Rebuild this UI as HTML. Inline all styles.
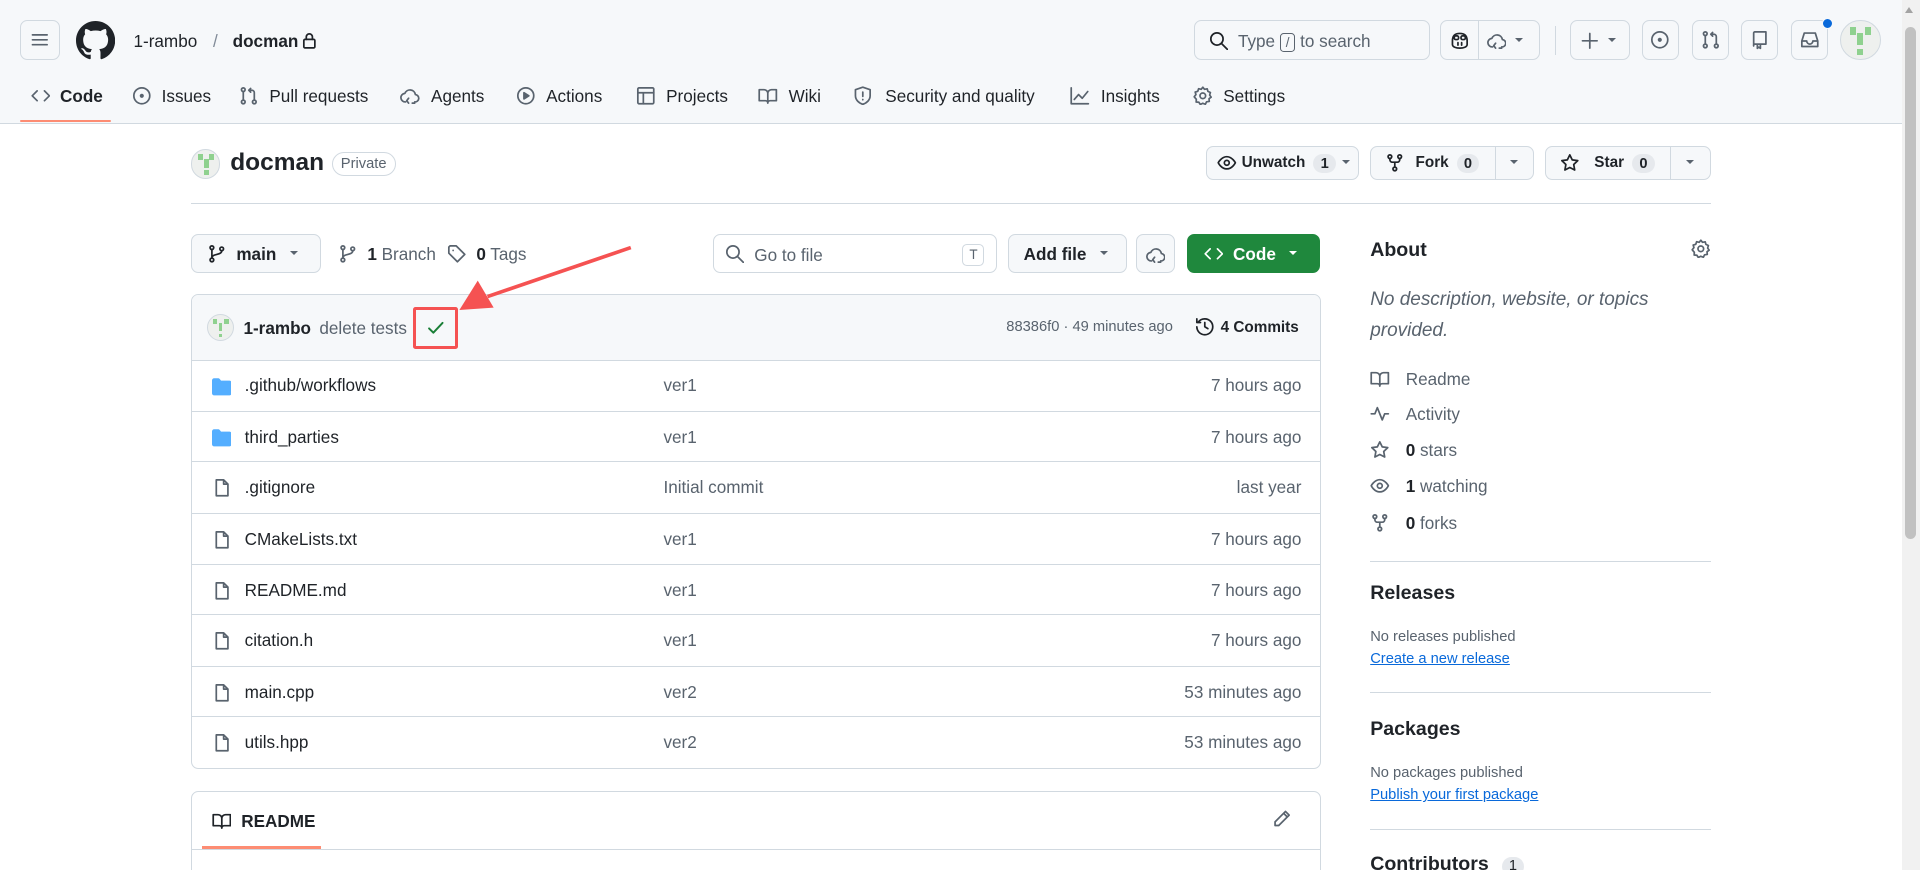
<!DOCTYPE html>
<html><head><meta charset="utf-8"><style>
*{box-sizing:border-box;margin:0;padding:0}
html,body{width:1920px;height:870px;overflow:hidden;background:#fff}
#z{zoom:1.22449;width:1568px;height:711px;position:relative;font-family:"Liberation Sans",sans-serif;font-size:14px;color:#1f2328;overflow:hidden}
.a{position:absolute}
.btn{position:absolute;border:1px solid #d1d9e0;border-radius:6px;background:#f6f8fa}
.hb{background:transparent}
svg{display:block}
.ic{position:absolute;fill:none;stroke:#59636e;stroke-width:1.4;stroke-linecap:round;stroke-linejoin:round}
.row{position:absolute;left:0;width:922px;height:42px;border-top:1px solid #d1d9e0}
.row .n{position:absolute;left:43px;top:12px}
.row .m{position:absolute;left:385px;top:12px;color:#59636e}
.row .t{position:absolute;right:16px;top:12px;color:#59636e}
.cnt{display:inline-block;background:#e6e9ed;border-radius:10px;padding:1px 6px;font-size:12px;margin-left:6px}
.side{position:absolute;left:1119px;color:#59636e}
.hr{position:absolute;left:1119px;width:278px;height:1px;background:#d1d9e0}
</style></head><body><div id="z">
<!-- header -->
<div class="a" style="left:0;top:0;width:1568px;height:101px;background:#f6f8fa;border-bottom:1px solid #d1d9e0"></div>
<div class="btn hb" style="left:16px;top:16px;width:33px;height:33px"><svg class="ic" style="left:8px;top:8px" width="16" height="16"><path d="M2 4h12M2 8h12M2 12h12"/></svg></div>
<svg class="a" style="left:62px;top:17px" width="32" height="32" viewBox="0 0 16 16"><path fill="#1f2328" d="M8 0C3.58 0 0 3.58 0 8c0 3.54 2.29 6.53 5.47 7.59.4.07.55-.17.55-.38 0-.19-.01-.82-.01-1.490-2.01.37-2.53-.49-2.69-.94-.09-.23-.48-.94-.82-1.13-.28-.15-.68-.52-.01-.53.63-.01 1.08.58 1.23.82.72 1.21 1.87.87 2.33.66.07-.52.28-.87.51-1.07-1.78-.2-3.640-.89-3.640-3.95 0-.87.31-1.59.82-2.15-.08-.2-.36-1.02.08-2.12 0 0 .67-.21 2.2.82.64-.18 1.32-.27 2-.27.68 0 1.36.09 2 .27 1.53-1.04 2.2-.82 2.2-.82.44 1.1.16 1.92.08 2.12.51.56.82 1.27.82 2.15 0 3.07-1.87 3.75-3.65 3.95.29.25.54.73.54 1.48 0 1.07-.01 1.93-.01 2.2 0 .21.15.46.55.38A8.013 8.013 0 0016 8c0-4.42-3.58-8-8-8z"/></svg>
<div class="a" style="left:109px;top:25px">1-rambo</div>
<div class="a" style="left:174px;top:25px;color:#818b98">/</div>
<div class="a" style="left:190px;top:25px;font-weight:bold">docman</div>
<svg class="ic" style="left:247px;top:26px;stroke:#1f2328" width="12" height="14"><rect x="1.5" y="6" width="9" height="7" rx="1"/><path d="M3.5 6V4a2.5 2.5 0 015 0v2"/></svg>
<!-- nav -->
<svg class="ic" style="left:25px;top:70px" width="16" height="16"><path d="M5 4L1 8l4 4M11 4l4 4-4 4"/></svg>
<div class="a" style="left:49px;top:70px;font-weight:bold">Code</div>
<div class="a" style="left:16px;top:98px;width:75px;height:2px;background:#fd8c73;border-radius:2px"></div>
<svg class="ic" style="left:108px;top:70px" width="16" height="16"><circle cx="8" cy="8" r="6.5"/><circle cx="8" cy="8" r="1" fill="#59636e"/></svg>
<div class="a" style="left:132px;top:70px">Issues</div>
<svg class="ic" style="left:195px;top:70px" width="16" height="16"><circle cx="3.5" cy="3" r="1.5"/><circle cx="3.5" cy="13" r="1.5"/><circle cx="12.5" cy="13" r="1.5"/><path d="M3.5 4.5v7M12.5 11.5V5.5a2 2 0 00-2-2H8M9.5 2L8 3.5 9.5 5"/></svg>
<div class="a" style="left:220px;top:70px">Pull requests</div>
<svg class="ic" style="left:327px;top:70px" width="16" height="16"><path d="M4.5 13a3.5 3.5 0 01-.5-7 4.5 4.5 0 018.6 1A3 3 0 0112 13M7 10l-1.5 2L7 14M10 14h2"/></svg>
<div class="a" style="left:352px;top:70px">Agents</div>
<svg class="ic" style="left:421px;top:70px" width="16" height="16"><circle cx="8" cy="8" r="6.5"/><path d="M6.5 5.5v5l4-2.5z" fill="#59636e"/></svg>
<div class="a" style="left:446px;top:70px">Actions</div>
<svg class="ic" style="left:519px;top:70px" width="16" height="16"><rect x="1.5" y="1.5" width="13" height="13" rx="1"/><path d="M1.5 5.5h13M6 5.5v9"/></svg>
<div class="a" style="left:544px;top:70px">Projects</div>
<svg class="ic" style="left:619px;top:70px" width="16" height="16"><path d="M1 3h4a3 3 0 013 3v8a2 2 0 00-2-2H1zM15 3h-4a3 3 0 00-3 3v8a2 2 0 012-2h5z"/></svg>
<div class="a" style="left:644px;top:70px">Wiki</div>
<svg class="ic" style="left:697px;top:70px" width="16" height="16"><path d="M8 1l6 2v5c0 3.5-3 6-6 7-3-1-6-3.5-6-7V3zM8 5v3.5M8 11v.2"/></svg>
<div class="a" style="left:723px;top:70px">Security and quality</div>
<svg class="ic" style="left:874px;top:70px" width="16" height="16"><path d="M1 1.5v13h14M3.5 11l3.5-4 3 3 4.5-5.5"/></svg>
<div class="a" style="left:899px;top:70px">Insights</div>
<svg class="ic" style="left:974px;top:70px" width="16" height="16"><circle cx="8" cy="8" r="2.3"/><path d="M8 1l1.4 1.7 2.2-.4.6 2.1 2 .9-.6 2.1 1.2 1.7-1.7 1.3.2 2.2-2.2.3-1 2-2.1-.8-2 1-1.2-1.8-2.2-.2.1-2.2L1 8.8 2.4 7 1.8 5l2.1-.7.7-2.1 2.1.5z"/></svg>
<div class="a" style="left:999px;top:70px">Settings</div>
<!-- right header -->
<div class="btn hb" style="left:975px;top:16px;width:193px;height:33px"></div>
<svg class="ic" style="left:987px;top:25px;stroke:#1f2328" width="16" height="16"><circle cx="6.5" cy="6.5" r="5"/><path d="M10.5 10.5L15 15"/></svg>
<div class="a" style="left:1011px;top:25px;color:#59636e">Type <span style="display:inline-block;border:1px solid #59636e;border-radius:3px;font-size:11px;padding:0 4px;line-height:14px">/</span> to search</div>
<div class="btn hb" style="left:1176px;top:16px;width:82px;height:33px"><div class="a" style="left:30px;top:0;width:1px;height:31px;background:#d1d9e0"></div></div>
<svg class="ic" style="left:1184px;top:25px;stroke:#1f2328" width="16" height="16"><path d="M2 8c0-4 2-6 6-6s6 2 6 6v3c0 2-3 3-6 3s-6-1-6-3z"/><rect x="3.5" y="4" width="3.5" height="3" rx="1.2"/><rect x="9" y="4" width="3.5" height="3" rx="1.2"/><path d="M6.5 9.5v2M9.5 9.5v2"/></svg>
<svg class="ic" style="left:1214px;top:25px" width="16" height="16"><path d="M4.5 13a3.5 3.5 0 01-.5-7 4.5 4.5 0 018.6 1A3 3 0 0112 13M7 10l-1.5 2L7 14M10 14h2"/></svg>
<div class="a" style="left:1237px;top:31px;border:4px solid transparent;border-top:4px solid #59636e"></div>
<div class="a" style="left:1270px;top:21px;width:1px;height:24px;background:#d1d9e0"></div>
<div class="btn hb" style="left:1282px;top:16px;width:49px;height:33px"></div>
<svg class="ic" style="left:1290px;top:25px" width="16" height="16"><path d="M8 2v12M2 8h12"/></svg>
<div class="a" style="left:1313px;top:31px;border:4px solid transparent;border-top:4px solid #59636e"></div>
<div class="btn hb" style="left:1341px;top:16px;width:30px;height:33px"><svg class="ic" style="left:6px;top:8px" width="16" height="16"><circle cx="8" cy="8" r="6.5"/><circle cx="8" cy="8" r="1" fill="#59636e"/></svg></div>
<div class="btn hb" style="left:1382px;top:16px;width:30px;height:33px"><svg class="ic" style="left:6px;top:8px" width="16" height="16"><circle cx="3.5" cy="3" r="1.5"/><circle cx="3.5" cy="13" r="1.5"/><circle cx="12.5" cy="13" r="1.5"/><path d="M3.5 4.5v7M12.5 11.5V5.5a2 2 0 00-2-2H8M9.5 2L8 3.5 9.5 5"/></svg></div>
<div class="btn hb" style="left:1422px;top:16px;width:30px;height:33px"><svg class="ic" style="left:6px;top:8px" width="16" height="16"><path d="M3 13V2.5A1 1 0 014 1.5h9v10H4a1 1 0 00-1 1.5zM6 12v3l1.2-1 1.3 1v-3"/></svg></div>
<div class="btn hb" style="left:1463px;top:16px;width:30px;height:33px"><svg class="ic" style="left:6px;top:8px" width="16" height="16"><path d="M1.5 9l2-6.5h9l2 6.5v4.5h-13zM1.5 9h4a2.5 2.5 0 005 0h4"/></svg></div>
<div class="a" style="left:1488px;top:15px;width:9px;height:9px;border-radius:50%;background:#0969da;border:1px solid #f6f8fa"></div>
<div class="a" style="left:1503px;top:16px;width:33px;height:33px;border-radius:50%;background:#eef0ee;border:1px solid #d1d9e0;overflow:hidden"><div class="a" style="left:7px;top:5px;width:5px;height:7px;background:#8fd18f"></div><div class="a" style="left:13px;top:10px;width:5px;height:10px;background:#8fd18f"></div><div class="a" style="left:19px;top:5px;width:5px;height:7px;background:#8fd18f"></div><div class="a" style="left:13px;top:23px;width:5px;height:5px;background:#8fd18f"></div></div>
<!-- scrollbar -->
<div class="a" style="left:1553px;top:0;width:15px;height:711px;background:#f1f1f1"></div>
<div class="a" style="left:1556px;top:22px;width:9px;height:418px;background:#c1c1c1;border-radius:5px"></div>
<div class="a" style="left:1556px;top:6px;border:4px solid transparent;border-bottom:5px solid #a3a3a3;border-top:0"></div>
<!-- repo header -->
<div class="a" style="left:156px;top:122px;width:24px;height:24px;border-radius:50%;background:#eef0ee;border:1px solid #d1d9e0;overflow:hidden"><div class="a" style="left:5px;top:3px;width:4px;height:5px;background:#8fd18f"></div><div class="a" style="left:10px;top:7px;width:4px;height:7px;background:#8fd18f"></div><div class="a" style="left:14px;top:3px;width:4px;height:5px;background:#8fd18f"></div><div class="a" style="left:10px;top:16px;width:4px;height:4px;background:#8fd18f"></div></div>
<div class="a" style="left:188px;top:122px;font-size:20px;font-weight:bold">docman</div>
<div class="a" style="left:271px;top:124px;width:52px;height:20px;border:1px solid #d1d9e0;border-radius:10px;font-size:12px;color:#59636e;text-align:center;line-height:18px">Private</div>
<div class="btn" style="left:985px;top:119px;width:125px;height:28px"></div>
<svg class="ic" style="left:994px;top:125px;stroke:#1f2328" width="16" height="16"><path d="M1 8s2.5-5 7-5 7 5 7 5-2.5 5-7 5-7-5-7-5z"/><circle cx="8" cy="8" r="2"/></svg>
<div class="a" style="left:1014px;top:126px;font-size:12.5px;font-weight:bold">Unwatch <span class="cnt" style="margin-left:3px">1</span></div>
<div class="a" style="left:1096px;top:131px;border:4px solid transparent;border-top:4px solid #59636e"></div>
<div class="btn" style="left:1119px;top:119px;width:134px;height:28px"><div class="a" style="left:101px;top:0;width:1px;height:26px;background:#d1d9e0"></div></div>
<svg class="ic" style="left:1131px;top:125px;stroke:#1f2328" width="16" height="16"><circle cx="4" cy="3" r="1.5"/><circle cx="12" cy="3" r="1.5"/><circle cx="8" cy="13" r="1.5"/><path d="M4 4.5v1a2 2 0 002 2h4a2 2 0 002-2v-1M8 7.5v4"/></svg>
<div class="a" style="left:1156px;top:126px;font-size:12.5px;font-weight:bold">Fork <span class="cnt" style="margin-left:3px">0</span></div>
<div class="a" style="left:1233px;top:131px;border:4px solid transparent;border-top:4px solid #59636e"></div>
<div class="btn" style="left:1262px;top:119px;width:135px;height:28px"><div class="a" style="left:101px;top:0;width:1px;height:26px;background:#d1d9e0"></div></div>
<svg class="ic" style="left:1274px;top:125px;stroke:#1f2328" width="16" height="16"><path d="M8 1.5l2 4.1 4.5.6-3.3 3.2.8 4.5L8 11.8l-4 2.1.8-4.5L1.5 6.2 6 5.6z"/></svg>
<div class="a" style="left:1302px;top:126px;font-size:12.5px;font-weight:bold">Star <span class="cnt" style="margin-left:3px">0</span></div>
<div class="a" style="left:1377px;top:131px;border:4px solid transparent;border-top:4px solid #59636e"></div>
<div class="a" style="left:156px;top:166px;width:1241px;height:1px;background:#d1d9e0"></div>
<!-- toolbar -->
<div class="btn" style="left:156px;top:191px;width:106px;height:32px"></div>
<svg class="ic" style="left:169px;top:199px;stroke:#1f2328" width="16" height="16"><circle cx="4" cy="3" r="1.5"/><circle cx="4" cy="13" r="1.5"/><circle cx="12" cy="4" r="1.5"/><path d="M4 4.5v7M12 5.5c0 4-8 2-8 6"/></svg>
<div class="a" style="left:193px;top:199px;font-weight:bold">main</div>
<div class="a" style="left:237px;top:205px;border:4px solid transparent;border-top:4px solid #59636e"></div>
<svg class="ic" style="left:276px;top:199px" width="16" height="16"><circle cx="4" cy="3" r="1.5"/><circle cx="4" cy="13" r="1.5"/><circle cx="12" cy="4" r="1.5"/><path d="M4 4.5v7M12 5.5c0 4-8 2-8 6"/></svg>
<div class="a" style="left:300px;top:199px;color:#59636e"><b style="color:#1f2328">1</b> Branch</div>
<svg class="ic" style="left:365px;top:199px" width="16" height="16"><path d="M1.5 2.5v5l7 7 6-6-7-7h-5zM5 5.2v.1"/></svg>
<div class="a" style="left:389px;top:199px;color:#59636e"><b style="color:#1f2328">0</b> Tags</div>
<div class="btn hb" style="left:582px;top:191px;width:232px;height:32px"></div>
<svg class="ic" style="left:592px;top:199px" width="16" height="16"><circle cx="6.5" cy="6.5" r="5"/><path d="M10.5 10.5L15 15"/></svg>
<div class="a" style="left:616px;top:200px;color:#59636e">Go to file</div>
<div class="a" style="left:786px;top:199px;width:18px;height:18px;border:1px solid #d1d9e0;border-radius:4px;font-size:11px;color:#59636e;text-align:center;line-height:16px">T</div>
<div class="btn" style="left:823px;top:191px;width:97px;height:32px"></div>
<div class="a" style="left:836px;top:199px;font-weight:bold">Add file</div>
<div class="a" style="left:898px;top:205px;border:4px solid transparent;border-top:4px solid #59636e"></div>
<div class="btn" style="left:928px;top:191px;width:32px;height:32px"><svg class="ic" style="left:7px;top:8px" width="16" height="16"><path d="M4.5 13a3.5 3.5 0 01-.5-7 4.5 4.5 0 018.6 1A3 3 0 0112 13M7 10l-1.5 2L7 14M10 14h2"/></svg></div>
<div class="a" style="left:969px;top:191px;width:109px;height:32px;background:#1f883d;border-radius:6px"></div>
<svg class="ic" style="left:983px;top:199px;stroke:#fff" width="16" height="16"><path d="M5 4L1 8l4 4M11 4l4 4-4 4"/></svg>
<div class="a" style="left:1007px;top:199px;font-weight:bold;color:#fff">Code</div>
<div class="a" style="left:1053px;top:205px;border:4px solid transparent;border-top:4px solid #fff"></div>
<!-- file box -->
<div class="a" style="left:156px;top:240px;width:923px;height:388px;border:1px solid #d1d9e0;border-radius:6px;overflow:hidden">
<div class="a" style="left:0;top:0;width:922px;height:53px;background:#f6f8fa"></div>
<div class="a" style="left:12px;top:16px;width:22px;height:22px;border-radius:50%;background:#eef0ee;border:1px solid #d1d9e0;overflow:hidden"><div class="a" style="left:4px;top:3px;width:4px;height:4px;background:#8fd18f"></div><div class="a" style="left:9px;top:6px;width:3px;height:7px;background:#8fd18f"></div><div class="a" style="left:13px;top:3px;width:4px;height:4px;background:#8fd18f"></div><div class="a" style="left:9px;top:15px;width:3px;height:3px;background:#8fd18f"></div></div>
<div class="a" style="left:42px;top:19px;font-weight:bold">1-rambo</div>
<div class="a" style="left:104px;top:19px;color:#59636e">delete tests</div>
<svg class="ic" style="left:191px;top:19px;stroke:#1a7f37;stroke-width:1.6" width="16" height="16"><path d="M2.5 8.5l3.5 3.5 7.5-8"/></svg>
<div class="a" style="left:665px;top:20px;font-size:12px;color:#59636e">88386f0 · 49 minutes ago</div>
<svg class="ic" style="left:819px;top:18px;stroke:#1f2328" width="16" height="16"><path d="M1.5 8A6.5 6.5 0 108 1.5 6.5 6.5 0 002.8 4M1.5 1.5V4.5h3M8 4.5V8l2.5 1.5"/></svg>
<div class="a" style="left:840px;top:20px;font-size:12.5px;font-weight:bold">4 Commits</div>
<div class="row" style="top:53px"><svg class="a" style="left:16px;top:13px" width="16" height="16"><path fill="#54aeff" d="M1.75 1A1.75 1.75 0 000 2.75v10.5C0 14.22.78 15 1.75 15h12.5A1.75 1.75 0 0016 13.25v-8.5A1.75 1.75 0 0014.25 3H7.5a.25.25 0 01-.2-.1l-.9-1.2C6.07 1.26 5.55 1 5 1z"/></svg><div class="n">.github/workflows</div><div class="m">ver1</div><div class="t">7 hours ago</div></div>
<div class="row" style="top:95px"><svg class="a" style="left:16px;top:13px" width="16" height="16"><path fill="#54aeff" d="M1.75 1A1.75 1.75 0 000 2.75v10.5C0 14.22.78 15 1.75 15h12.5A1.75 1.75 0 0016 13.25v-8.5A1.75 1.75 0 0014.25 3H7.5a.25.25 0 01-.2-.1l-.9-1.2C6.07 1.26 5.55 1 5 1z"/></svg><div class="n">third_parties</div><div class="m">ver1</div><div class="t">7 hours ago</div></div>
<div class="row" style="top:136px"><svg class="ic" style="left:16px;top:13px" width="16" height="16"><path d="M3.5 1.5h6l3.5 3.5v9.5h-9.5zM9.5 1.5V5H13"/></svg><div class="n">.gitignore</div><div class="m">Initial commit</div><div class="t">last year</div></div>
<div class="row" style="top:178px"><svg class="ic" style="left:16px;top:13px" width="16" height="16"><path d="M3.5 1.5h6l3.5 3.5v9.5h-9.5zM9.5 1.5V5H13"/></svg><div class="n">CMakeLists.txt</div><div class="m">ver1</div><div class="t">7 hours ago</div></div>
<div class="row" style="top:220px"><svg class="ic" style="left:16px;top:13px" width="16" height="16"><path d="M3.5 1.5h6l3.5 3.5v9.5h-9.5zM9.5 1.5V5H13"/></svg><div class="n">README.md</div><div class="m">ver1</div><div class="t">7 hours ago</div></div>
<div class="row" style="top:261px"><svg class="ic" style="left:16px;top:13px" width="16" height="16"><path d="M3.5 1.5h6l3.5 3.5v9.5h-9.5zM9.5 1.5V5H13"/></svg><div class="n">citation.h</div><div class="m">ver1</div><div class="t">7 hours ago</div></div>
<div class="row" style="top:303px"><svg class="ic" style="left:16px;top:13px" width="16" height="16"><path d="M3.5 1.5h6l3.5 3.5v9.5h-9.5zM9.5 1.5V5H13"/></svg><div class="n">main.cpp</div><div class="m">ver2</div><div class="t">53 minutes ago</div></div>
<div class="row" style="top:344px"><svg class="ic" style="left:16px;top:13px" width="16" height="16"><path d="M3.5 1.5h6l3.5 3.5v9.5h-9.5zM9.5 1.5V5H13"/></svg><div class="n">utils.hpp</div><div class="m">ver2</div><div class="t">53 minutes ago</div></div>
</div>
<!-- readme -->
<div class="a" style="left:156px;top:646px;width:923px;height:80px;border:1px solid #d1d9e0;border-radius:6px"></div>
<div class="a" style="left:157px;top:693px;width:921px;height:1px;background:#d1d9e0"></div>
<svg class="ic" style="left:173px;top:662px;stroke:#1f2328" width="16" height="16"><path d="M1 3h4a3 3 0 013 3v8a2 2 0 00-2-2H1zM15 3h-4a3 3 0 00-3 3v8a2 2 0 012-2h5z"/></svg>
<div class="a" style="left:197px;top:662px;font-weight:bold">README</div>
<div class="a" style="left:165px;top:691px;width:97px;height:2px;background:#fd8c73"></div>
<svg class="ic" style="left:1039px;top:661px" width="16" height="16"><path d="M11 2l3 3-8.5 8.5H2.5v-3zM9.5 3.5l3 3"/></svg>
<!-- sidebar -->
<div class="a" style="left:1119px;top:195px;font-size:16px;font-weight:bold">About</div>
<svg class="ic" style="left:1381px;top:195px" width="16" height="16"><circle cx="8" cy="8" r="2.3"/><path d="M8 1l1.4 1.7 2.2-.4.6 2.1 2 .9-.6 2.1 1.2 1.7-1.7 1.3.2 2.2-2.2.3-1 2-2.1-.8-2 1-1.2-1.8-2.2-.2.1-2.2L1 8.8 2.4 7 1.8 5l2.1-.7.7-2.1 2.1.5z"/></svg>
<div class="side" style="top:233px;font-style:italic;font-size:15.5px;line-height:25px;width:260px">No description, website, or topics provided.</div>
<svg class="ic" style="left:1119px;top:301px" width="16" height="16"><path d="M1 3h4a3 3 0 013 3v8a2 2 0 00-2-2H1zM15 3h-4a3 3 0 00-3 3v8a2 2 0 012-2h5z"/></svg>
<div class="side" style="left:1148px;top:301px">Readme</div>
<svg class="ic" style="left:1119px;top:330px" width="16" height="16"><path d="M1 8h3l2-5 4 10 2-5h3"/></svg>
<div class="side" style="left:1148px;top:330px">Activity</div>
<svg class="ic" style="left:1119px;top:359px" width="16" height="16"><path d="M8 1.5l2 4.1 4.5.6-3.3 3.2.8 4.5L8 11.8l-4 2.1.8-4.5L1.5 6.2 6 5.6z"/></svg>
<div class="side" style="left:1148px;top:359px"><b style="color:#1f2328">0</b> stars</div>
<svg class="ic" style="left:1119px;top:389px" width="16" height="16"><path d="M1 8s2.5-5 7-5 7 5 7 5-2.5 5-7 5-7-5-7-5z"/><circle cx="8" cy="8" r="2"/></svg>
<div class="side" style="left:1148px;top:389px"><b style="color:#1f2328">1</b> watching</div>
<svg class="ic" style="left:1119px;top:419px" width="16" height="16"><circle cx="4" cy="3" r="1.5"/><circle cx="12" cy="3" r="1.5"/><circle cx="8" cy="13" r="1.5"/><path d="M4 4.5v1a2 2 0 002 2h4a2 2 0 002-2v-1M8 7.5v4"/></svg>
<div class="side" style="left:1148px;top:419px"><b style="color:#1f2328">0</b> forks</div>
<div class="hr" style="top:458px"></div>
<div class="a" style="left:1119px;top:475px;font-size:16px;font-weight:bold">Releases</div>
<div class="side" style="top:514px;font-size:12px">No releases published</div>
<div class="side" style="top:532px;font-size:12px;color:#0969da;text-decoration:underline">Create a new release</div>
<div class="hr" style="top:565px"></div>
<div class="a" style="left:1119px;top:586px;font-size:16px;font-weight:bold">Packages</div>
<div class="side" style="top:625px;font-size:12px">No packages published</div>
<div class="side" style="top:643px;font-size:12px;color:#0969da;text-decoration:underline">Publish your first package</div>
<div class="hr" style="top:677px"></div>
<div class="a" style="left:1119px;top:697px;font-size:16px;font-weight:bold">Contributors <span class="cnt" style="font-weight:normal">1</span></div>
<!-- annotation -->
<div class="a" style="left:337px;top:251px;width:37px;height:34px;border:3px solid #f55252;border-radius:2px"></div>
<svg class="a" style="left:360px;top:195px" width="165" height="70"><path d="M155 7L38 47" stroke="#f55252" stroke-width="3" fill="none"/><path d="M15 58L30 34 43 56z" fill="#f55252"/></svg>
</div></body></html>
